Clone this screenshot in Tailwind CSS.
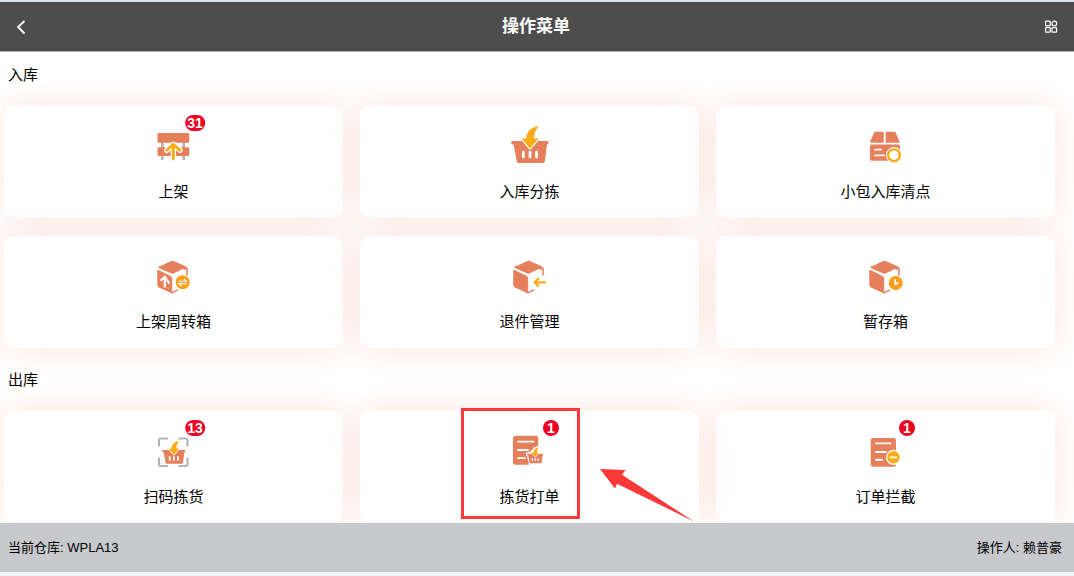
<!DOCTYPE html>
<html lang="zh-CN">
<head>
    <meta charset="UTF-8">
    <meta name="viewport" content="width=device-width, initial-scale=1.0">
    <title>操作菜单</title>
    <script src="https://cdn.jsdelivr.net/npm/@tailwindcss/browser@4"></script>
</head>
<body class="h-screen flex flex-col bg-white text-black border-t-2 border-[#dde1ee] font-['Liberation_Sans','Noto_Sans_CJK_SC',sans-serif]">
    <!-- Shared shapes -->
    <svg class="hidden" aria-hidden="true">
        <symbol id="basket" viewBox="0 0 41 40" overflow="visible">
            <path d="M3.2 15H38.5Q40 15 39.5 17L38.8 18.6H38L35.8 35.5Q35.5 37 34 37H9.5Q8 37 7.8 35.5L4.6 18.6H3L2.2 17Q2 15 3.2 15Z" fill="#e57f5c"/>
            <path d="M14.3 26.2V31M21 26.2V31M27.6 26.2V31" stroke="#fff" stroke-width="2.8" stroke-linecap="round"/>
            <path d="M30 .3C26.5 3.5 25 7.500 25 12.500H29.800L21 22.500L12.600 12.500H17.400C17.400 6 21.500 1 30 .3Z" fill="#fdab14" stroke="#fff" stroke-width="2.4" stroke-linejoin="round" paint-order="stroke"/>
        </symbol>
        <symbol id="box" viewBox="0 0 41 40" overflow="visible">
            <path d="M19.5 5L33 10.9L19.5 17.4L5.5 11.4Z" fill="#e57f5c" stroke="#e57f5c" stroke-linejoin="round"/>
            <path d="M4.8 14.2L17.6 20.4Q18.6 21 18.7 22V36.8L5.8 30.9Q4.8 30.3 4.8 29.4Z" fill="#e57f5c" stroke="#e57f5c" stroke-linejoin="round"/>
            <path d="M31 13.2L34 12V19M19 36.9L24.5 34.2" fill="none" stroke="#e57f5c" stroke-width="1.5" stroke-linecap="round" stroke-linejoin="round"/>
        </symbol>
    </svg>

    <!-- Header -->
    <header class="h-[50px] shrink-0 flex items-center justify-between pl-[14px] pr-4 bg-[#4d4d4d] text-white border-b border-[#b3b3b3]">
        <button type="button" aria-label="返回" class="w-[14px] h-[18px]">
            <svg viewBox="0 0 14 18" fill="none" stroke="currentColor" stroke-width="1.8"><path d="M10.5 3L4 9L10.5 15.5"/></svg>
        </button>
        <h1 class="text-[17px] leading-6 font-bold">操作菜单</h1>
        <button type="button" aria-label="应用" class="w-[14px] h-[14px]">
            <svg viewBox="0 0 14 14" fill="none" stroke="currentColor" stroke-width="1.2"><rect x="1.6" y="1.2" width="4.6" height="4.6" rx=".5"/><circle cx="10.3" cy="3.5" r="2.4"/><rect x="1.6" y="7.6" width="4.6" height="4.6" rx=".5"/><rect x="8" y="7.6" width="4.6" height="4.6" rx=".5"/></svg>
        </button>
    </header>

    <main class="flex-1 min-h-0 overflow-y-auto overflow-x-hidden text-[15px] leading-[22px]">
        <!-- Inbound -->
        <section>
            <h2 class="px-2 pt-3 pb-5">入库</h2>
            <div class="grid grid-cols-3 gap-x-[17px] gap-y-[18px] pl-1 pr-[19px]">
                <button type="button" class="flex flex-col items-center pt-5 pb-[15px] gap-[15px] rounded-[10px] bg-white shadow-[0_0_34px_rgba(240,120,85,0.18)]">
                    <span class="relative w-[41px] h-10">
                        <svg viewBox="0 0 41 40" fill="none">
                            <path d="M9.3 16V34M30.7 16V34" stroke="#b5b5b5" stroke-width="2.6"/>
                            <rect x="4.5" y="7" width="31.8" height="9.7" rx="1.5" fill="#e57f5c"/>
                            <rect x="4.5" y="21.3" width="31.8" height="8.8" rx="1.5" fill="#e57f5c"/>
                            <path d="M20.3 33V18.5M13.8 24.3L20.3 18.3L27 24.3" stroke="#fff" stroke-width="5.4" stroke-linecap="round" stroke-linejoin="round"/>
                            <path d="M20.3 33V18.5M13.8 24.3L20.3 18.3L27 24.3" stroke="#fdab14" stroke-width="2.9" stroke-linecap="round" stroke-linejoin="round"/>
                        </svg>
                        <span class="absolute left-[42px] -top-[11px] -translate-x-1/2 min-w-4 h-4 px-[2px] rounded-full bg-[#f00020] text-white text-[14px] leading-4 font-bold">31</span>
                    </span>
                    <span>上架</span>
                </button>
                <button type="button" class="flex flex-col items-center pt-5 pb-[15px] gap-[15px] rounded-[10px] bg-white shadow-[0_0_34px_rgba(240,120,85,0.18)]">
                    <svg class="w-[41px] h-10" viewBox="0 0 41 40"><use href="#basket" width="41" height="40"/></svg>
                    <span>入库分拣</span>
                </button>
                <button type="button" class="flex flex-col items-center pt-5 pb-[15px] gap-[15px] rounded-[10px] bg-white shadow-[0_0_34px_rgba(240,120,85,0.18)]">
                    <svg class="w-[41px] h-10" viewBox="0 0 41 40" fill="none">
                        <path d="M11 5.7H18.7V16.7H6Q4.8 16.7 5.2 15.5L9 7Q9.6 5.7 11 5.7ZM20.7 5.7H29Q30.3 5.7 30.9 7L34.5 15.5Q35 16.7 33.8 16.7H20.7Z" fill="#e57f5c"/>
                        <rect x="5" y="18.4" width="30" height="16.4" rx="1.8" fill="#e57f5c"/>
                        <path d="M10 23.7H16M10 29.3H19" stroke="#fff" stroke-width="1.7" stroke-linecap="round"/>
                        <circle cx="29" cy="29.3" r="8.2" fill="#fff"/>
                        <circle cx="29" cy="29.3" r="5.9" stroke="#fdab14" stroke-width="2.4"/>
                    </svg>
                    <span>小包入库清点</span>
                </button>
                <button type="button" class="flex flex-col items-center pt-5 pb-[15px] gap-[15px] rounded-[10px] bg-white shadow-[0_0_34px_rgba(240,120,85,0.18)]">
                    <svg class="w-[41px] h-10" viewBox="0 0 41 40" fill="none">
                        <use href="#box" width="41" height="40"/>
                        <path d="M11.8 31.5V21.5M7.5 24.8L11.8 21L16.2 27.5" stroke="#fff" stroke-width="2.2"/>
                        <circle cx="29.7" cy="26.3" r="7" fill="#ff9f1e"/>
                        <path d="M25.8 25.2H33.6L31 22.8M33.6 27.6H25.8L28.4 30" stroke="#fff" stroke-width="1.1"/>
                    </svg>
                    <span>上架周转箱</span>
                </button>
                <button type="button" class="flex flex-col items-center pt-5 pb-[15px] gap-[15px] rounded-[10px] bg-white shadow-[0_0_34px_rgba(240,120,85,0.18)]">
                    <svg class="w-[41px] h-10" viewBox="0 0 41 40" fill="none">
                        <use href="#box" width="41" height="40"/>
                        <path d="M36.8 26.3H26M29.8 22L25.8 26.3L29.8 30.6" stroke="#fdab14" stroke-width="2.3"/>
                    </svg>
                    <span>退件管理</span>
                </button>
                <button type="button" class="flex flex-col items-center pt-5 pb-[15px] gap-[15px] rounded-[10px] bg-white shadow-[0_0_34px_rgba(240,120,85,0.18)]">
                    <svg class="w-[41px] h-10" viewBox="0 0 41 40" fill="none">
                        <use href="#box" width="41" height="40"/>
                        <circle cx="30.7" cy="27" r="7" fill="#ff9f1e"/>
                        <path d="M30.2 23.2V28.2L33.6 26.8" stroke="#fff" stroke-width="1.7"/>
                    </svg>
                    <span>暂存箱</span>
                </button>
            </div>
        </section>

        <!-- Outbound -->
        <section class="mt-[9px]">
            <h2 class="px-2 pt-3 pb-5">出库</h2>
            <div class="grid grid-cols-3 gap-x-[17px] gap-y-[18px] pl-1 pr-[19px]">
                <button type="button" class="flex flex-col items-center pt-5 pb-[15px] gap-[15px] rounded-[10px] bg-white shadow-[0_0_34px_rgba(240,120,85,0.18)]">
                    <span class="relative w-[41px] h-10">
                        <svg viewBox="0 0 41 40" fill="none">
                            <path d="M6 15.5V9.5Q6 7.5 8 7.5H15M25.5 7.5H32.500Q34.500 7.500 34.500 9.500V15.500M34.500 26.500V33Q34.500 35 32.500 35H25.500M15 35H8Q6 35 6 33V26.500" stroke="#b5b5b5" stroke-width="2.2"/>
                            <g transform="translate(7.8 9.7) scale(.62)"><use href="#basket" width="41" height="40"/></g>
                        </svg>
                        <span class="absolute left-[42px] -top-[11px] -translate-x-1/2 min-w-4 h-4 px-[2px] rounded-full bg-[#f00020] text-white text-[14px] leading-4 font-bold">13</span>
                    </span>
                    <span>扫码拣货</span>
                </button>
                <div class="relative flex">
                    <button type="button" class="flex-1 flex flex-col items-center pt-5 pb-[15px] gap-[15px] rounded-[10px] bg-white shadow-[0_0_34px_rgba(240,120,85,0.18)]">
                        <span class="relative w-[41px] h-10">
                            <svg viewBox="0 0 41 40" fill="none">
                                <rect x="4" y="4.7" width="25.3" height="29" rx="2.5" fill="#e57f5c"/>
                                <path d="M9 10.7H24.5M9 19H19M9 27.2H16" stroke="#fff" stroke-width="1.8" stroke-linecap="round"/>
                                <path d="M30 14.5L25 16.5L21.5 20.5L16.5 22L18.5 27L20 34H33L36 22L31 20Z" fill="#fff"/>
                                <g transform="translate(17.1 16.2) scale(.433)"><use href="#basket" width="41" height="40"/></g>
                            </svg>
                            <span class="absolute left-[42px] -top-[11px] -translate-x-1/2 min-w-4 h-4 px-[2px] rounded-full bg-[#f00020] text-white text-[14px] leading-4 font-bold">1</span>
                        </span>
                        <span>拣货打单</span>
                    </button>
                    <!-- Highlight frame and pointer -->
                    <div class="absolute left-[101px] -top-[3px] w-[119px] h-[111px] border-3 border-[#fd3838] pointer-events-none"></div>
                    <svg class="absolute left-60 top-[58px] w-[94px] h-[53px] pointer-events-none" viewBox="0 0 94 53" fill="#fd3838"><path d="M0 0L25.5 1L22 5.8L94 52.5L17 14.7L15 19.5Z"/></svg>
                </div>
                <button type="button" class="flex flex-col items-center pt-5 pb-[15px] gap-[15px] rounded-[10px] bg-white shadow-[0_0_34px_rgba(240,120,85,0.18)]">
                    <span class="relative w-[41px] h-10">
                        <svg viewBox="0 0 41 40" fill="none">
                            <rect x="5.7" y="7" width="25.3" height="28.7" rx="2.5" fill="#e57f5c"/>
                            <path d="M11 12.4H25.5M11 21H21M11 28.7H17" stroke="#fff" stroke-width="1.9" stroke-linecap="round"/>
                            <circle cx="28.5" cy="26.3" r="7.6" fill="#fff"/>
                            <circle cx="28.5" cy="26.3" r="6.2" fill="#fdab14"/>
                            <path d="M24.8 26.3H32.2" stroke="#fff" stroke-width="1.7"/>
                        </svg>
                        <span class="absolute left-[42px] -top-[11px] -translate-x-1/2 min-w-4 h-4 px-[2px] rounded-full bg-[#f00020] text-white text-[14px] leading-4 font-bold">1</span>
                    </span>
                    <span>订单拦截</span>
                </button>
            </div>
        </section>
    </main>

    <!-- Footer -->
    <footer class="relative h-[53px] shrink-0 flex items-center justify-between pl-2 pr-3 bg-[#c8c9cc] border-b-4 border-[#f3f4fa] text-[13px] leading-5">
        <span>当前仓库: WPLA13</span>
        <span>操作人: 赖普豪</span>
    </footer>
</body>
</html>
